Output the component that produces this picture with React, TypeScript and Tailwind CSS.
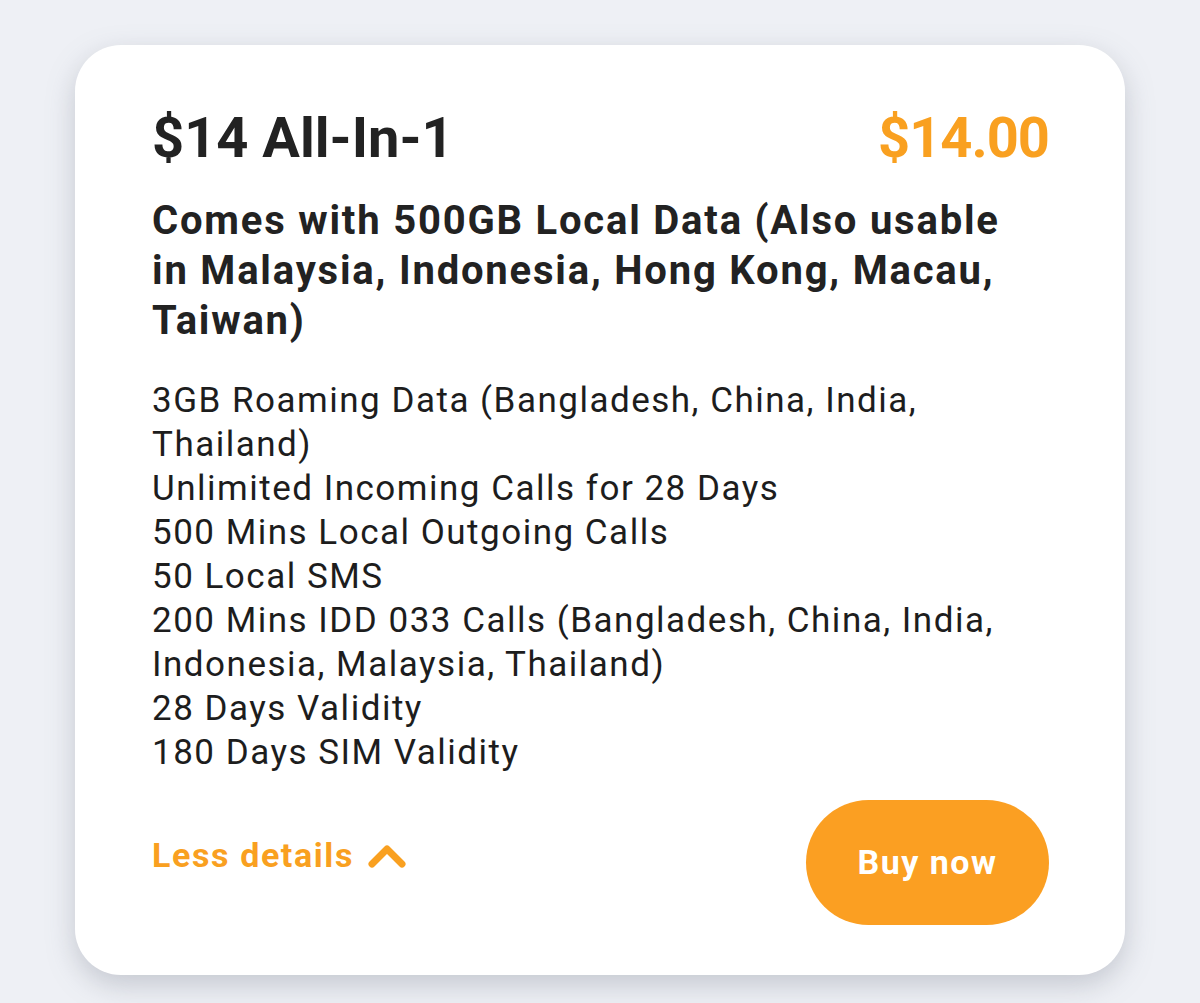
const FEATURES = [
  "3GB Roaming Data (Bangladesh, China, India, Thailand)",
  "Unlimited Incoming Calls for 28 Days",
  "500 Mins Local Outgoing Calls",
  "50 Local SMS",
  "200 Mins IDD 033 Calls (Bangladesh, China, India, Indonesia, Malaysia, Thailand)",
  "28 Days Validity",
  "180 Days SIM Validity",
];

const HEAD = { fontFamily: "Roboto, 'Noto Sans', sans-serif" };

export default function App() {
  return (
    <div className="min-h-[1003px] w-[1200px] bg-[#eef0f5] px-[75px] pt-[45px]">
      <div className="h-[930px] rounded-[46px] bg-white pl-[77px] pr-[76px] pt-[63px] shadow-[0_10px_28px_rgba(120,125,140,0.35)]">
        <div className="flex items-start justify-between" style={HEAD}>
          <h1 className="text-[56px] font-bold leading-[60px] text-[#222222]">$14 All-In-1</h1>
          <div className="text-[56px] font-bold leading-[60px] tracking-[-1px] text-[#f9a020]">$14.00</div>
        </div>

        <h2 className="mt-[28px] max-w-[870px] text-[40px] font-bold leading-[50px] tracking-[1.8px] text-[#222222]" style={HEAD}>
          Comes with 500GB Local Data (Also usable in Malaysia, Indonesia, Hong Kong, Macau, Taiwan)
        </h2>

        <ul className="mt-[33px] pr-[40px] text-[35px] leading-[44px] tracking-[1.5px] text-[#1d1d1d]" style={{ fontFamily: "Roboto, sans-serif" }}>
          {FEATURES.map((f) => (
            <li key={f}>{f}</li>
          ))}
        </ul>

        <div className="mt-[25px] flex items-center justify-between" style={HEAD}>
          <button className="mb-[14px] flex items-center gap-[14px] text-[34px] font-bold tracking-[1.6px] text-[#f9a020]">
            Less details
            <svg width="38" height="24" viewBox="0 0 38 24" fill="none">
              <path d="M4 20 L19 5 L34 20" stroke="#f9a020" strokeWidth="7" strokeLinecap="round" strokeLinejoin="round" />
            </svg>
          </button>
          <button className="h-[125px] w-[243px] rounded-full bg-[#fb9f22] text-[34px] font-bold tracking-[1.5px] text-white">Buy now</button>
        </div>
      </div>
    </div>
  );
}
